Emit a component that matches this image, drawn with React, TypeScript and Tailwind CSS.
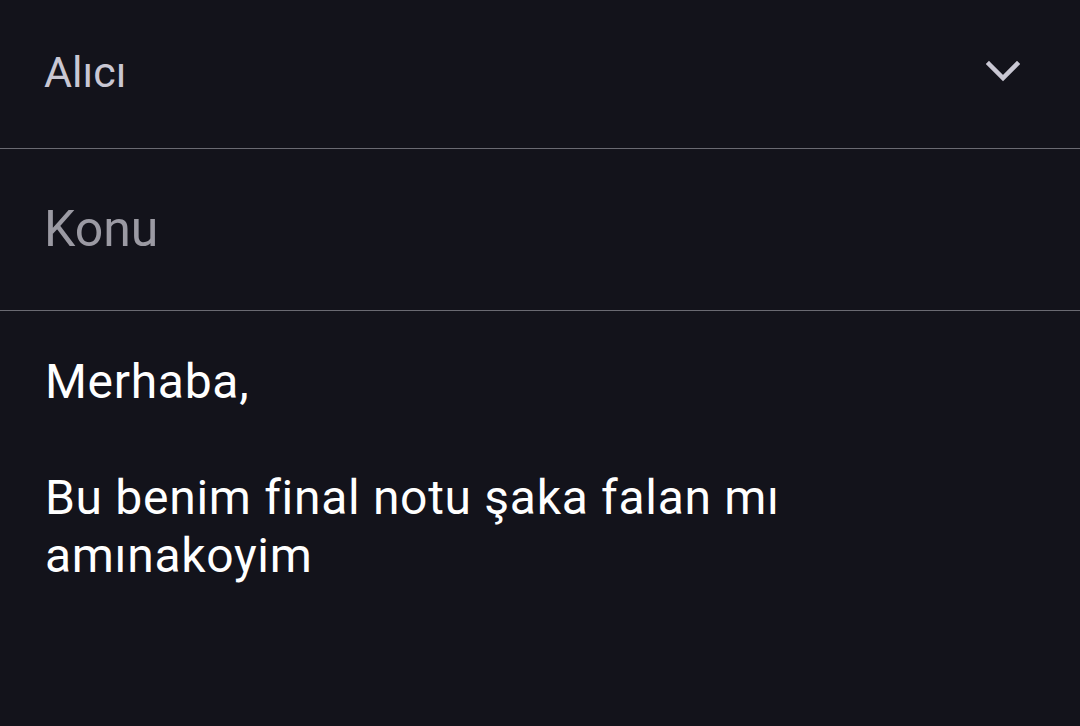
export default function App() {
  return (
    <div className="w-[1080px] h-[726px] bg-[#13131b] overflow-hidden" style={{ fontFamily: "Roboto, 'Noto Sans', sans-serif" }}>
      <div className="h-[148px] flex items-center justify-between pl-[44px] pr-[60px]">
        <span className="text-[43px] leading-none text-[#c9c7d3] mt-[-4px]">Alıcı</span>
        <svg width="34" height="22" viewBox="0 0 34 22" className="mt-[-6px]">
          <path d="M3 4 L17 18 L31 4" fill="none" stroke="#c9c7d3" strokeWidth="4.5" strokeLinecap="square" />
        </svg>
      </div>
      <div className="h-px bg-[#6a6a72]" />
      <div className="h-[161px] flex items-center pl-[44px]">
        <span className="text-[50px] leading-none text-[#9b9aa3] mt-[-2px]">Konu</span>
      </div>
      <div className="h-px bg-[#6a6a72]" />
      <div className="pl-[45px] pt-[42px] text-[48px] leading-[58px] text-white tracking-[0.7px] [font-variant-ligatures:none]">
        <div>Merhaba,</div>
        <div>&nbsp;</div>
        <div className="w-[800px]">Bu benim final notu şaka falan mı amınakoyim</div>
      </div>
    </div>
  );
}
